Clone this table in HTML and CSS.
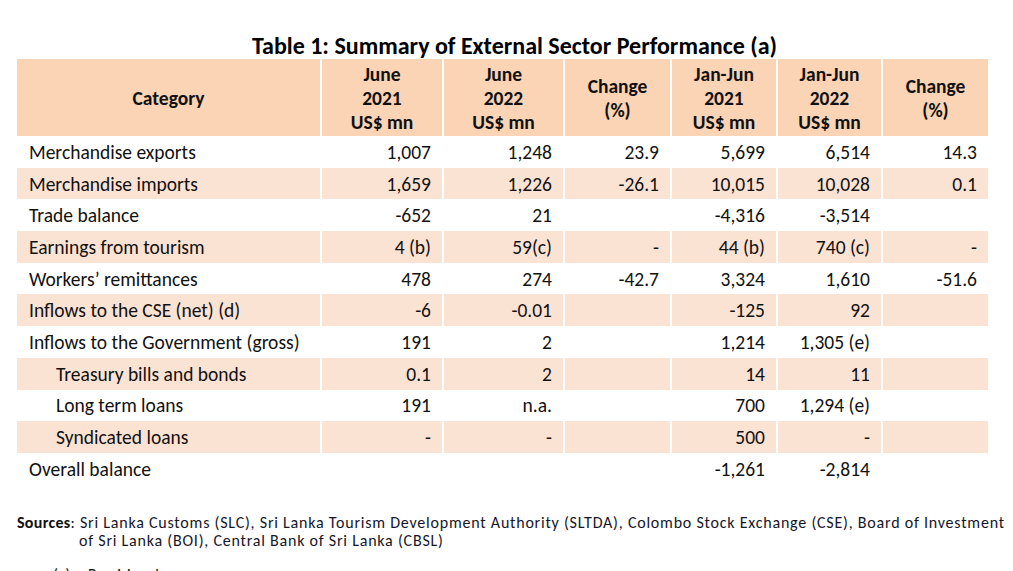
FILE: index.html
```html
<!DOCTYPE html>
<html lang="en">
<head>
<meta charset="utf-8">
<title>Table 1: Summary of External Sector Performance</title>
<link rel="stylesheet" href="styles.css">
</head>
<body>
<div class="page">
  <h1 class="title">Table 1: Summary of External Sector Performance (a)</h1>
  <table class="summary">
    <colgroup>
      <col class="c-cat"><col class="c-m1"><col class="c-m2"><col class="c-ch1"><col class="c-y1"><col class="c-y2"><col class="c-ch2">
    </colgroup>
    <thead>
      <tr>
        <th>Category</th>
        <th>June<br>2021<br>US$ mn</th>
        <th>June<br>2022<br>US$ mn</th>
        <th>Change<br>(%)</th>
        <th>Jan-Jun<br>2021<br>US$ mn</th>
        <th>Jan-Jun<br>2022<br>US$ mn</th>
        <th>Change<br>(%)</th>
      </tr>
    </thead>
    <tbody>
      <tr><td>Merchandise exports</td><td>1,007</td><td>1,248</td><td>23.9</td><td>5,699</td><td>6,514</td><td>14.3</td></tr>
      <tr class="shade"><td>Merchandise imports</td><td>1,659</td><td>1,226</td><td>-26.1</td><td>10,015</td><td>10,028</td><td>0.1</td></tr>
      <tr><td>Trade balance</td><td>-652</td><td>21</td><td></td><td>-4,316</td><td>-3,514</td><td></td></tr>
      <tr class="shade"><td>Earnings from tourism</td><td>4 (b)</td><td>59(c)</td><td>-</td><td>44 (b)</td><td>740 (c)</td><td>-</td></tr>
      <tr><td>Workers’ remittances</td><td>478</td><td>274</td><td>-42.7</td><td>3,324</td><td>1,610</td><td>-51.6</td></tr>
      <tr class="shade"><td>Inflows to the CSE (net) (d)</td><td>-6</td><td>-0.01</td><td></td><td>-125</td><td>92</td><td></td></tr>
      <tr><td>Inflows to the Government (gross)</td><td>191</td><td>2</td><td></td><td>1,214</td><td>1,305 (e)</td><td></td></tr>
      <tr class="shade"><td class="sub">Treasury bills and bonds</td><td>0.1</td><td>2</td><td></td><td>14</td><td>11</td><td></td></tr>
      <tr><td class="sub">Long term loans</td><td>191</td><td>n.a.</td><td></td><td>700</td><td>1,294 (e)</td><td></td></tr>
      <tr class="shade"><td class="sub">Syndicated loans</td><td>-</td><td>-</td><td></td><td>500</td><td>-</td><td></td></tr>
      <tr><td>Overall balance</td><td></td><td></td><td></td><td>-1,261</td><td>-2,814</td><td></td></tr>
    </tbody>
  </table>
  <div class="sources">
    <span class="label">Sources</span>: Sri Lanka Customs (SLC), Sri Lanka Tourism Development Authority (SLTDA), Colombo Stock Exchange (CSE), Board of Investment
    <div class="cont">of Sri Lanka (BOI), Central Bank of Sri Lanka (CBSL)</div>
  </div>
  <div class="note"><span class="mark">(a)</span>Provisional</div>
</div>
</body>
</html>
```

FILE: styles.css
```css
html, body {
  margin: 0;
  padding: 0;
  background: #ffffff;
}

body {
  font-family: Carlito, Lato, "Liberation Sans", sans-serif;
  color: #111111;
  overflow: hidden;
}

.page {
  width: 1013px;
  height: 571px;
  overflow: hidden;
  padding-top: 33px;
  box-sizing: border-box;
}

.title {
  margin: 0;
  padding-left: 16px;
  font-size: 24px;
  line-height: 26px;
  font-weight: 700;
  text-align: center;
  color: #000;
}

.summary {
  margin-left: 17px;
  width: 971px;
  border-collapse: collapse;
  table-layout: fixed;
  font-size: 19.5px;
}

.c-cat { width: 304px; }
.c-m1 { width: 122px; }
.c-m2 { width: 121px; }
.c-ch1 { width: 107px; }
.c-y1 { width: 106px; }
.c-y2 { width: 105px; }
.c-ch2 { width: 106px; }

.summary th {
  background: #fad4b4;
  height: 77px;
  padding: 0;
  font-weight: 700;
  line-height: 24px;
  text-align: center;
  vertical-align: middle;
  border-left: 2px solid #ffffff;
}

.summary th:first-child,
.summary td:first-child {
  border-left: none;
}

.summary td {
  height: 31.7px;
  padding: 0 11px 0 0;
  text-align: right;
  vertical-align: middle;
  line-height: 20px;
  border-left: 2px solid #ffffff;
  white-space: nowrap;
}

.summary td:first-child {
  text-align: left;
  padding-left: 12px;
}

.summary td.sub {
  padding-left: 39px;
}

.summary tr.shade td {
  background: #fbe3d4;
}

.sources {
  margin-top: 29px;
  margin-left: 17px;
  font-size: 16px;
  letter-spacing: 0.78px;
  line-height: 18px;
  color: #15152a;
  white-space: nowrap;
}

.sources .label {
  font-weight: 700;
  letter-spacing: 0.3px;
  color: #111;
}

.sources .cont {
  padding-left: 62px;
}

.note {
  margin-top: 16px;
  margin-left: 53px;
  font-size: 16px;
  line-height: 18px;
}

.note .mark {
  display: inline-block;
  width: 35px;
}
```
